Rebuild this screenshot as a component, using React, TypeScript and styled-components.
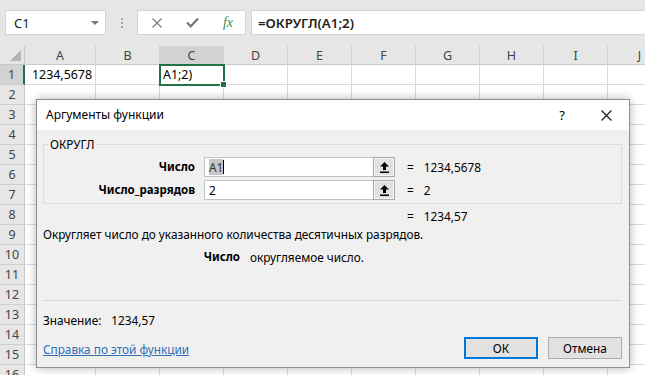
import styled, { createGlobalStyle } from 'styled-components'

const Global = createGlobalStyle`
  html, body {
    margin: 0;
    padding: 0;
    background: #fff;
  }
  body {
    font-family: "Noto Sans", "Open Sans", sans-serif;
    color: #000;
  }
`

const Screen = styled.div`
  position: relative;
  width: 645px;
  height: 375px;
  overflow: hidden;
  background: #fff;
`

/* formula bar */

const Toolbar = styled.div`
  display: flex;
  align-items: flex-start;
  box-sizing: border-box;
  height: 46px;
  padding: 10px 0 0 5px;
  background: #e6e6e6;
`

const NameBox = styled.div`
  display: flex;
  align-items: center;
  justify-content: space-between;
  box-sizing: border-box;
  width: 101px;
  height: 25px;
  padding: 0 6px 0 8px;
  background: #fff;
  border: 1px solid #d4d4d4;
  font-size: 13px;
  color: #222;
`

const Caret = styled.span`
  width: 0;
  height: 0;
  border-left: 4px solid transparent;
  border-right: 4px solid transparent;
  border-top: 4px solid #777;
`

const Grip = styled.div`
  display: flex;
  flex-direction: column;
  align-items: center;
  justify-content: center;
  gap: 2px;
  width: 31px;
  height: 25px;

  span {
    width: 2px;
    height: 2px;
    background: #a8a8a8;
  }
`

const FxButtons = styled.div`
  display: flex;
  align-items: center;
  justify-content: space-between;
  box-sizing: border-box;
  width: 109px;
  height: 25px;
  padding: 0 12px 0 14px;
  background: #fff;
  border: 1px solid #d4d4d4;
`

const Fx = styled.span`
  font-family: "Liberation Serif", serif;
  font-style: italic;
  font-size: 14px;
  color: #3d8a5c;
`

const FormulaInput = styled.div`
  display: flex;
  align-items: center;
  flex: 1;
  box-sizing: border-box;
  height: 25px;
  margin-left: 5px;
  padding-left: 6px;
  background: #fff;
  border: 1px solid #d4d4d4;
  border-right: none;
  font-size: 13.3px;
  font-weight: 600;
  color: #222;
`

/* sheet */

const Sheet = styled.div`
  display: grid;
  grid-template-columns: 25px 71px repeat(9, 64px);
  grid-template-rows: 19px;
  grid-auto-rows: 20px;
  font-size: 12.4px;
`

const Corner = styled.div`
  display: flex;
  align-items: flex-end;
  justify-content: flex-end;
  box-sizing: border-box;
  padding: 0 3px 3px 0;
  background: #e6e6e6;
  border-right: 1px solid #c8c8c8;
  border-bottom: 1px solid #c8c8c8;

  &::after {
    content: "";
    width: 0;
    height: 0;
    border-left: 11px solid transparent;
    border-bottom: 11px solid #b5b5b5;
  }
`

const ColHead = styled.div<{ $active?: boolean }>`
  display: flex;
  align-items: center;
  justify-content: center;
  box-sizing: border-box;
  background: ${p => (p.$active ? '#d2d2d2' : '#e6e6e6')};
  border-right: 1px solid #cfcfcf;
  border-bottom: 1px solid ${p => (p.$active ? '#217346' : '#c8c8c8')};
  color: #444;
  font-size: 12.5px;
`

const RowHead = styled.div<{ $active?: boolean }>`
  display: flex;
  align-items: center;
  justify-content: center;
  box-sizing: border-box;
  background: ${p => (p.$active ? '#d2d2d2' : '#e6e6e6')};
  border-right: ${p => (p.$active ? '2px solid #217346' : '1px solid #c8c8c8')};
  border-bottom: 1px solid #cfcfcf;
  color: #444;
  font-size: 12.5px;
`

const Cell = styled.div<{ $active?: boolean; $num?: boolean }>`
  position: relative;
  display: flex;
  align-items: center;
  justify-content: ${p => (p.$num ? 'flex-end' : 'flex-start')};
  box-sizing: border-box;
  padding: 0 3px;
  border-right: 1px solid #dadada;
  border-bottom: 1px solid #dadada;
  white-space: nowrap;
  ${p =>
    p.$active &&
    `
    z-index: 1;
    outline: 2px solid #217346;
    outline-offset: -1px;
    &::after {
      content: "";
      position: absolute;
      right: -4px;
      bottom: -4px;
      width: 5px;
      height: 5px;
      background: #217346;
      border: 1px solid #fff;
    }
  `}
`

/* dialog */

const Dialog = styled.div`
  position: absolute;
  left: 36px;
  top: 99px;
  display: flex;
  flex-direction: column;
  box-sizing: border-box;
  width: 594px;
  height: 269px;
  background: #f0f0f0;
  border: 1px solid #8f8f8f;
  box-shadow: 0 0 9px rgba(0, 0, 0, 0.3);
  font-size: 11.8px;
  line-height: 16px;
`

const TitleBar = styled.div`
  display: flex;
  align-items: center;
  height: 30px;
  padding: 0 16px 0 9px;
  background: #fff;
  font-size: 12px;
`

const Title = styled.span`
  flex: 1;
`

const TitleButton = styled.span`
  display: flex;
  justify-content: center;
  width: 14px;
  margin-left: 30px;
  font-size: 13px;
`

const Body = styled.div`
  display: flex;
  flex-direction: column;
  flex: 1;
  padding: 6px 7px 8px 6px;
`

const Group = styled.fieldset`
  margin: 0;
  padding: 5px 0 3px 1px;
  border: 1px solid #dcdcdc;
`

const GroupTitle = styled.legend`
  margin-left: 3px;
  padding: 0 2px;
  line-height: 16px;
`

const ArgRows = styled.div`
  display: flex;
  flex-direction: column;
  gap: 3px;
`

const ArgRow = styled.div`
  display: flex;
  align-items: center;
  height: 20px;
`

const ArgLabel = styled.span`
  width: 150px;
  margin-right: 9px;
  text-align: right;
  font-weight: 700;
  font-size: 11.5px;
`

const ArgInput = styled.div`
  display: flex;
  align-items: center;
  box-sizing: border-box;
  width: 169px;
  height: 20px;
  padding-left: 4px;
  background: #fff;
  border: 1px solid #c3c3c3;
  border-right: none;
`

const Selected = styled.span`
  background: #c6c6c6;
  color: #333;
`

const TextCaret = styled.span`
  display: inline-block;
  width: 1px;
  height: 14px;
  background: #000;
`

const RefButton = styled.div`
  display: flex;
  align-items: center;
  justify-content: center;
  box-sizing: border-box;
  width: 22px;
  height: 20px;
  background: #e1e1e1;
  border: 1px solid #a8a8a8;
  box-shadow: inset 0 0 0 1px #f4f4f4;
`

const ArgValue = styled.span`
  margin-left: 12px;

  b {
    font-weight: 400;
    margin-right: 10px;
  }
`

const ResultLine = styled.div`
  margin-top: 4px;
  padding-left: 364px;

  b {
    font-weight: 400;
    margin-right: 10px;
  }
`

const Description = styled.div`
  margin-top: 2px;
`

const ArgHelp = styled.div`
  display: grid;
  grid-template-columns: 197px 1fr;
  column-gap: 10px;
  margin-top: 7px;

  b {
    text-align: right;
    font-size: 11.5px;
  }
`

const Separator = styled.div`
  height: 1px;
  margin-top: 35px;
  background: #dadada;
`

const Footer = styled.div`
  display: flex;
  align-items: flex-end;
  justify-content: space-between;
  margin-top: auto;
`

const FooterLeft = styled.div`
  display: flex;
  flex-direction: column;
`

const ValueLine = styled.div`
  span {
    margin-left: 10px;
  }
`

const HelpLink = styled.a`
  margin-top: 13px;
  padding-bottom: 2px;
  color: #2f6fb7;
  text-decoration: underline;
  cursor: pointer;
`

const Buttons = styled.div`
  display: flex;
  gap: 10px;
`

const Button = styled.button<{ $primary?: boolean }>`
  box-sizing: border-box;
  width: 74px;
  height: 22px;
  padding: 0;
  background: #e1e1e1;
  border: ${p => (p.$primary ? '2px solid #0078d7' : '1px solid #adadad')};
  font-family: inherit;
  font-size: 11.8px;
  color: #000;
`

const columns = ['A', 'B', 'C', 'D', 'E', 'F', 'G', 'H', 'I', 'J']
const rows = Array.from({ length: 16 }, (_, i) => i + 1)

function CloseIcon({ size, color }: { size: number; color: string }) {
  return (
    <svg width={size} height={size} viewBox="0 0 10 10">
      <path d="M0.5 0.5 L9.5 9.5 M9.5 0.5 L0.5 9.5" stroke={color} strokeWidth="1.1" fill="none" />
    </svg>
  )
}

function CheckIcon() {
  return (
    <svg width="13" height="11" viewBox="0 0 13 11">
      <path d="M1 5.5 L4.8 9.3 L12 1.5" stroke="#777" strokeWidth="2.2" fill="none" />
    </svg>
  )
}

function CollapseIcon() {
  return (
    <svg width="9" height="11" viewBox="0 0 9 11">
      <path d="M4.5 0 L9 4.5 L6 4.5 L6 8 L3 8 L3 4.5 L0 4.5 Z" fill="#000" />
      <rect x="0" y="9.5" width="9" height="1.5" fill="#000" />
    </svg>
  )
}

export default function App() {
  return (
    <Screen>
      <Global />
      <Toolbar>
        <NameBox>
          C1
          <Caret />
        </NameBox>
        <Grip>
          <span />
          <span />
          <span />
        </Grip>
        <FxButtons>
          <CloseIcon size={10} color="#777" />
          <CheckIcon />
          <Fx>fx</Fx>
        </FxButtons>
        <FormulaInput>=ОКРУГЛ(А1;2)</FormulaInput>
      </Toolbar>

      <Sheet>
        <Corner />
        {columns.map(c => (
          <ColHead key={c} $active={c === 'C'}>
            {c}
          </ColHead>
        ))}
        {rows.map(r => [
          <RowHead key={`h${r}`} $active={r === 1}>
            {r}
          </RowHead>,
          ...columns.map(c => {
            const active = r === 1 && c === 'C'
            let text = ''
            if (r === 1 && c === 'A') text = '1234,5678'
            if (active) text = 'А1;2)'
            return (
              <Cell key={`${c}${r}`} $active={active} $num={r === 1 && c === 'A'}>
                {text}
              </Cell>
            )
          }),
        ])}
      </Sheet>

      <Dialog>
        <TitleBar>
          <Title>Аргументы функции</Title>
          <TitleButton>?</TitleButton>
          <TitleButton>
            <CloseIcon size={11} color="#222" />
          </TitleButton>
        </TitleBar>
        <Body>
          <Group>
            <GroupTitle>ОКРУГЛ</GroupTitle>
            <ArgRows>
              <ArgRow>
                <ArgLabel>Число</ArgLabel>
                <ArgInput>
                  <Selected>А1</Selected>
                  <TextCaret />
                </ArgInput>
                <RefButton>
                  <CollapseIcon />
                </RefButton>
                <ArgValue>
                  <b>=</b>1234,5678
                </ArgValue>
              </ArgRow>
              <ArgRow>
                <ArgLabel>Число_разрядов</ArgLabel>
                <ArgInput>2</ArgInput>
                <RefButton>
                  <CollapseIcon />
                </RefButton>
                <ArgValue>
                  <b>=</b>2
                </ArgValue>
              </ArgRow>
            </ArgRows>
          </Group>
          <ResultLine>
            <b>=</b>1234,57
          </ResultLine>
          <Description>Округляет число до указанного количества десятичных разрядов.</Description>
          <ArgHelp>
            <b>Число</b>
            <span>округляемое число.</span>
          </ArgHelp>
          <Separator />
          <Footer>
            <FooterLeft>
              <ValueLine>
                Значение:<span>1234,57</span>
              </ValueLine>
              <HelpLink>Справка по этой функции</HelpLink>
            </FooterLeft>
            <Buttons>
              <Button $primary>ОК</Button>
              <Button>Отмена</Button>
            </Buttons>
          </Footer>
        </Body>
      </Dialog>
    </Screen>
  )
}
